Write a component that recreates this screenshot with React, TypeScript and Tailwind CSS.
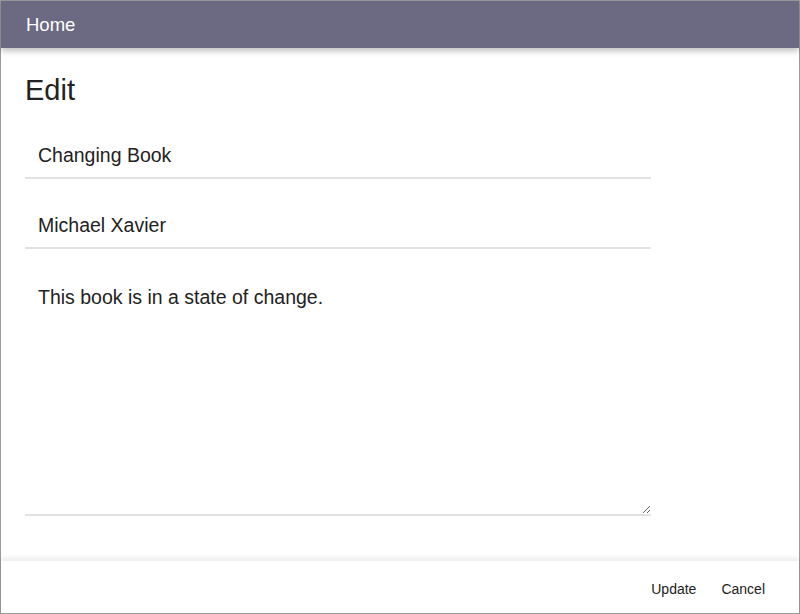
import React, { useState } from "react";

const EditPage = () => {
    const [title, setTitle] = useState("Changing Book")
    const [author, setAuthor] = useState("Michael Xavier")
    const [desc, setDesc] = useState("This book is in a state of change.")

    return (
        <div className="h-[614px] w-[800px] flex flex-col border border-[#9a9a9a] bg-white font-['Liberation_Sans',Arial,sans-serif] text-[#222]">
            <header className="h-[47px] shrink-0 bg-[#6c6983] flex items-center px-[25px] shadow-[0_3px_6px_rgba(0,0,0,0.25)] z-10">
                <span className="text-white text-[18.5px]">Home</span>
            </header>

            <main className="flex-1 px-[24px] pt-[26px]">
                <h1 className="text-[29px] leading-[32px] text-[#222] mb-[24px]">Edit</h1>
                <div className="w-[626px] flex flex-col gap-[20px]">
                    <input
                        value={title}
                        onChange={(e) => setTitle(e.target.value)}
                        className="h-[49px] px-[13px] pt-[4px] text-[19.5px] outline-none border-b-2 border-[#e2e2e2]"
                    />
                    <input
                        value={author}
                        onChange={(e) => setAuthor(e.target.value)}
                        className="h-[50px] px-[13px] pt-[4px] text-[19.5px] outline-none border-b-2 border-[#e2e2e2]"
                    />
                    <textarea
                        value={desc}
                        onChange={(e) => setDesc(e.target.value)}
                        className="h-[247px] px-[13px] pt-[16px] text-[19.5px] leading-[24px] outline-none border-b-2 border-[#e2e2e2] resize-y"
                    />
                </div>
            </main>

            <footer className="h-[52px] shrink-0 flex items-center justify-end gap-[25px] pl-[33px] pr-[34px] pt-[4px] shadow-[0_-3px_5px_rgba(0,0,0,0.08)]">
                <button className="text-[14px] text-[#222]">Update</button>
                <button className="text-[14px] text-[#222]">Cancel</button>
            </footer>
        </div>
    )
}

export default function App() {
    return <EditPage />
}
